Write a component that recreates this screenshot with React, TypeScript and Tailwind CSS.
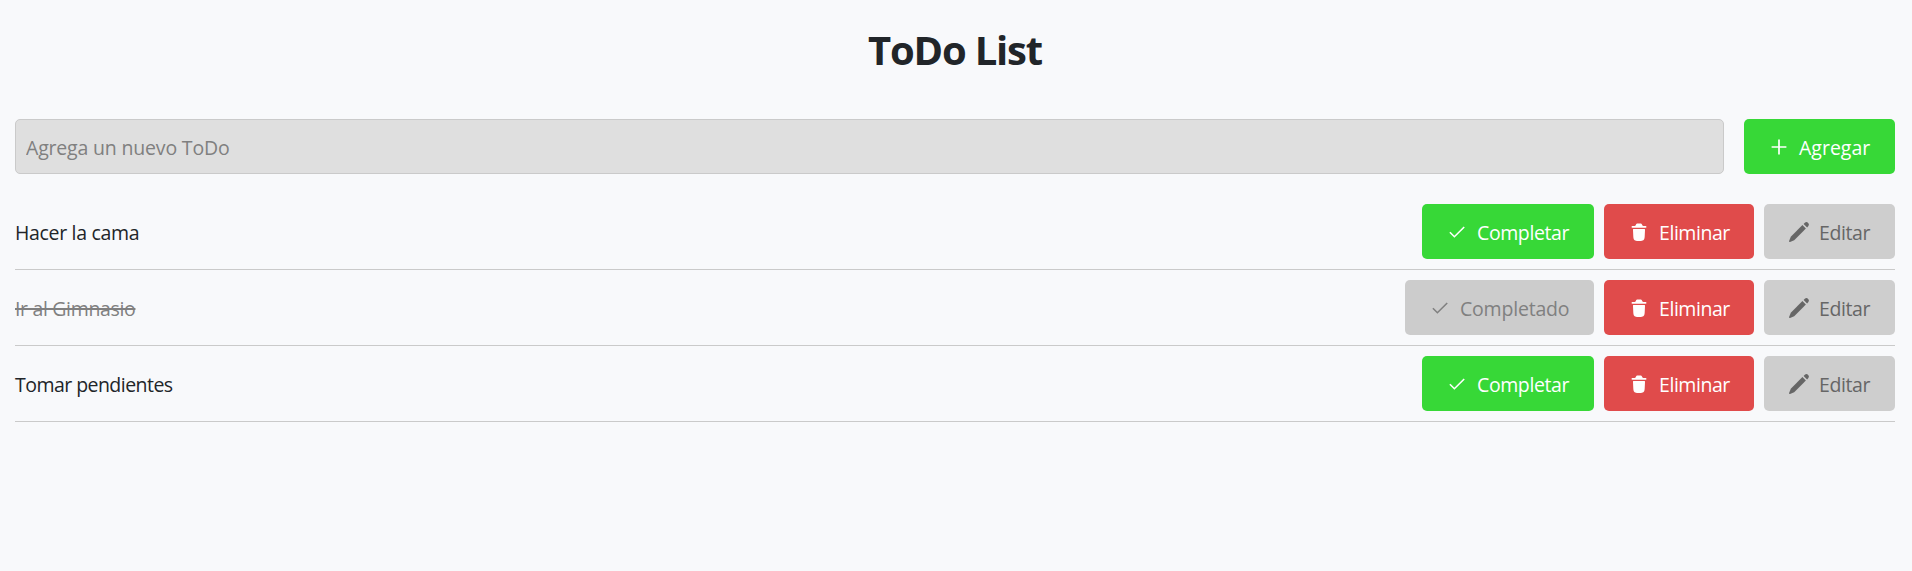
import type { ReactNode } from "react";

const CheckIcon = () => (
  <svg className="size-5 shrink-0" viewBox="0 0 20 20" fill="none" stroke="currentColor" strokeWidth="1.6">
    <path d="M2.9 10.2 7.4 14.7 17.2 5" />
  </svg>
);

const PlusIcon = () => (
  <svg className="size-5 shrink-0" viewBox="0 0 20 20" fill="none" stroke="currentColor" strokeWidth="1.7">
    <path d="M10 2.6V17.4M2.6 10H17.4" />
  </svg>
);

const TrashIcon = () => (
  <svg className="size-5 shrink-0" viewBox="0 0 20 20" fill="currentColor">
    <path d="M2.5 4.9C2.5 4.4 2.9 4.1 3.4 4.1H5.6C6.2 4 6.5 3.6 6.8 3 7.2 2.1 7.8 1.6 8.8 1.6H11.2C12.2 1.6 12.8 2.1 13.2 3 13.5 3.6 13.8 4 14.4 4.1H16.6C17.1 4.1 17.5 4.4 17.5 4.9S17.1 5.7 16.6 5.7H3.4C2.9 5.7 2.5 5.4 2.5 4.9Z" />
    <path d="M4.8 6.9H15.2C15.8 6.9 16.1 7.3 16 7.9L15.7 14.6C15.5 17.8 14.7 18.9 12 18.9H8C5.3 18.9 4.5 17.8 4.3 14.6L4 7.9C3.9 7.3 4.2 6.9 4.8 6.9Z" />
  </svg>
);

const PencilIcon = () => (
  <svg className="size-5 shrink-0" viewBox="0 0 20 20" fill="currentColor">
    <path d="M13.4 3.1 16.9 6.6 5.2 18.2 1 19.9C.3 20.1-.1 19.7.1 19L1.8 14.8Z" />
    <path d="M14.6 1.9 15.8.8C16.9-.2 18.2-.1 19.1.9 20.1 1.8 20.2 3.1 19.2 4.2L18.1 5.4Z" />
  </svg>
);

type ButtonProps = { className: string; icon: ReactNode; children: ReactNode; disabled?: boolean };

const Button = ({ className, icon, children, disabled }: ButtonProps) => (
  <button
    disabled={disabled}
    className={`flex h-[55px] shrink-0 items-center gap-2.5 rounded-[5px] pl-[25px] whitespace-nowrap ${className}`}
  >
    {icon}
    <span className="pt-0.5">{children}</span>
  </button>
);

const todos = [
  { text: "Hacer la cama", done: false, tracking: "tracking-[-0.32px]" },
  { text: "Ir al Gimnasio", done: true, tracking: "tracking-[-0.34px]" },
  { text: "Tomar pendientes", done: false, tracking: "tracking-[-0.54px]" },
];

export default function App() {
  return (
    <main className="min-h-screen bg-[#f8f9fb] pr-[17px] pl-[15px] font-['Open_Sans','Noto_Sans',sans-serif] text-[19.5px] text-[#212529]">
      <h1 className="flex h-[119px] items-start justify-center pt-5 text-[40px] leading-[60px] font-bold tracking-[-1.2px]">ToDo List</h1>
      <form className="mb-5 flex gap-5" onSubmit={(e) => e.preventDefault()}>
        <input
          placeholder="Agrega un nuevo ToDo"
          className="h-[55px] min-w-0 flex-1 rounded-[5px] border border-[#cacaca] bg-[#dfdfdf] px-2.5 pt-0.5 tracking-[-0.18px] outline-none placeholder:text-[#808080]"
        />
        <Button className="w-[151px] bg-[#37d837] text-white" icon={<PlusIcon />}>Agregar</Button>
      </form>
      <ul>
        {todos.map(({ text, done, tracking }) => (
          <li key={text} className="flex items-center justify-between border-b border-[#cacaca] py-2.5">
            <span className={`pt-0.5 ${tracking} ${done ? "text-[#808080] line-through decoration-2" : ""}`}>{text}</span>
            <div className="flex gap-2.5">
              {done ? (
                <Button disabled className="w-[189px] bg-[#cccccc] tracking-[-0.2px] text-[#808080]" icon={<CheckIcon />}>Completado</Button>
              ) : (
                <Button className="w-[172px] bg-[#37d837] tracking-[-0.4px] text-white" icon={<CheckIcon />}>Completar</Button>
              )}
              <Button className="w-[150px] bg-[#e04b4b] tracking-[-0.44px] text-white" icon={<TrashIcon />}>Eliminar</Button>
              <Button className="w-[131px] bg-[#cecece] tracking-[-0.4px] text-[#666666]" icon={<PencilIcon />}>Editar</Button>
            </div>
          </li>
        ))}
      </ul>
    </main>
  );
}
